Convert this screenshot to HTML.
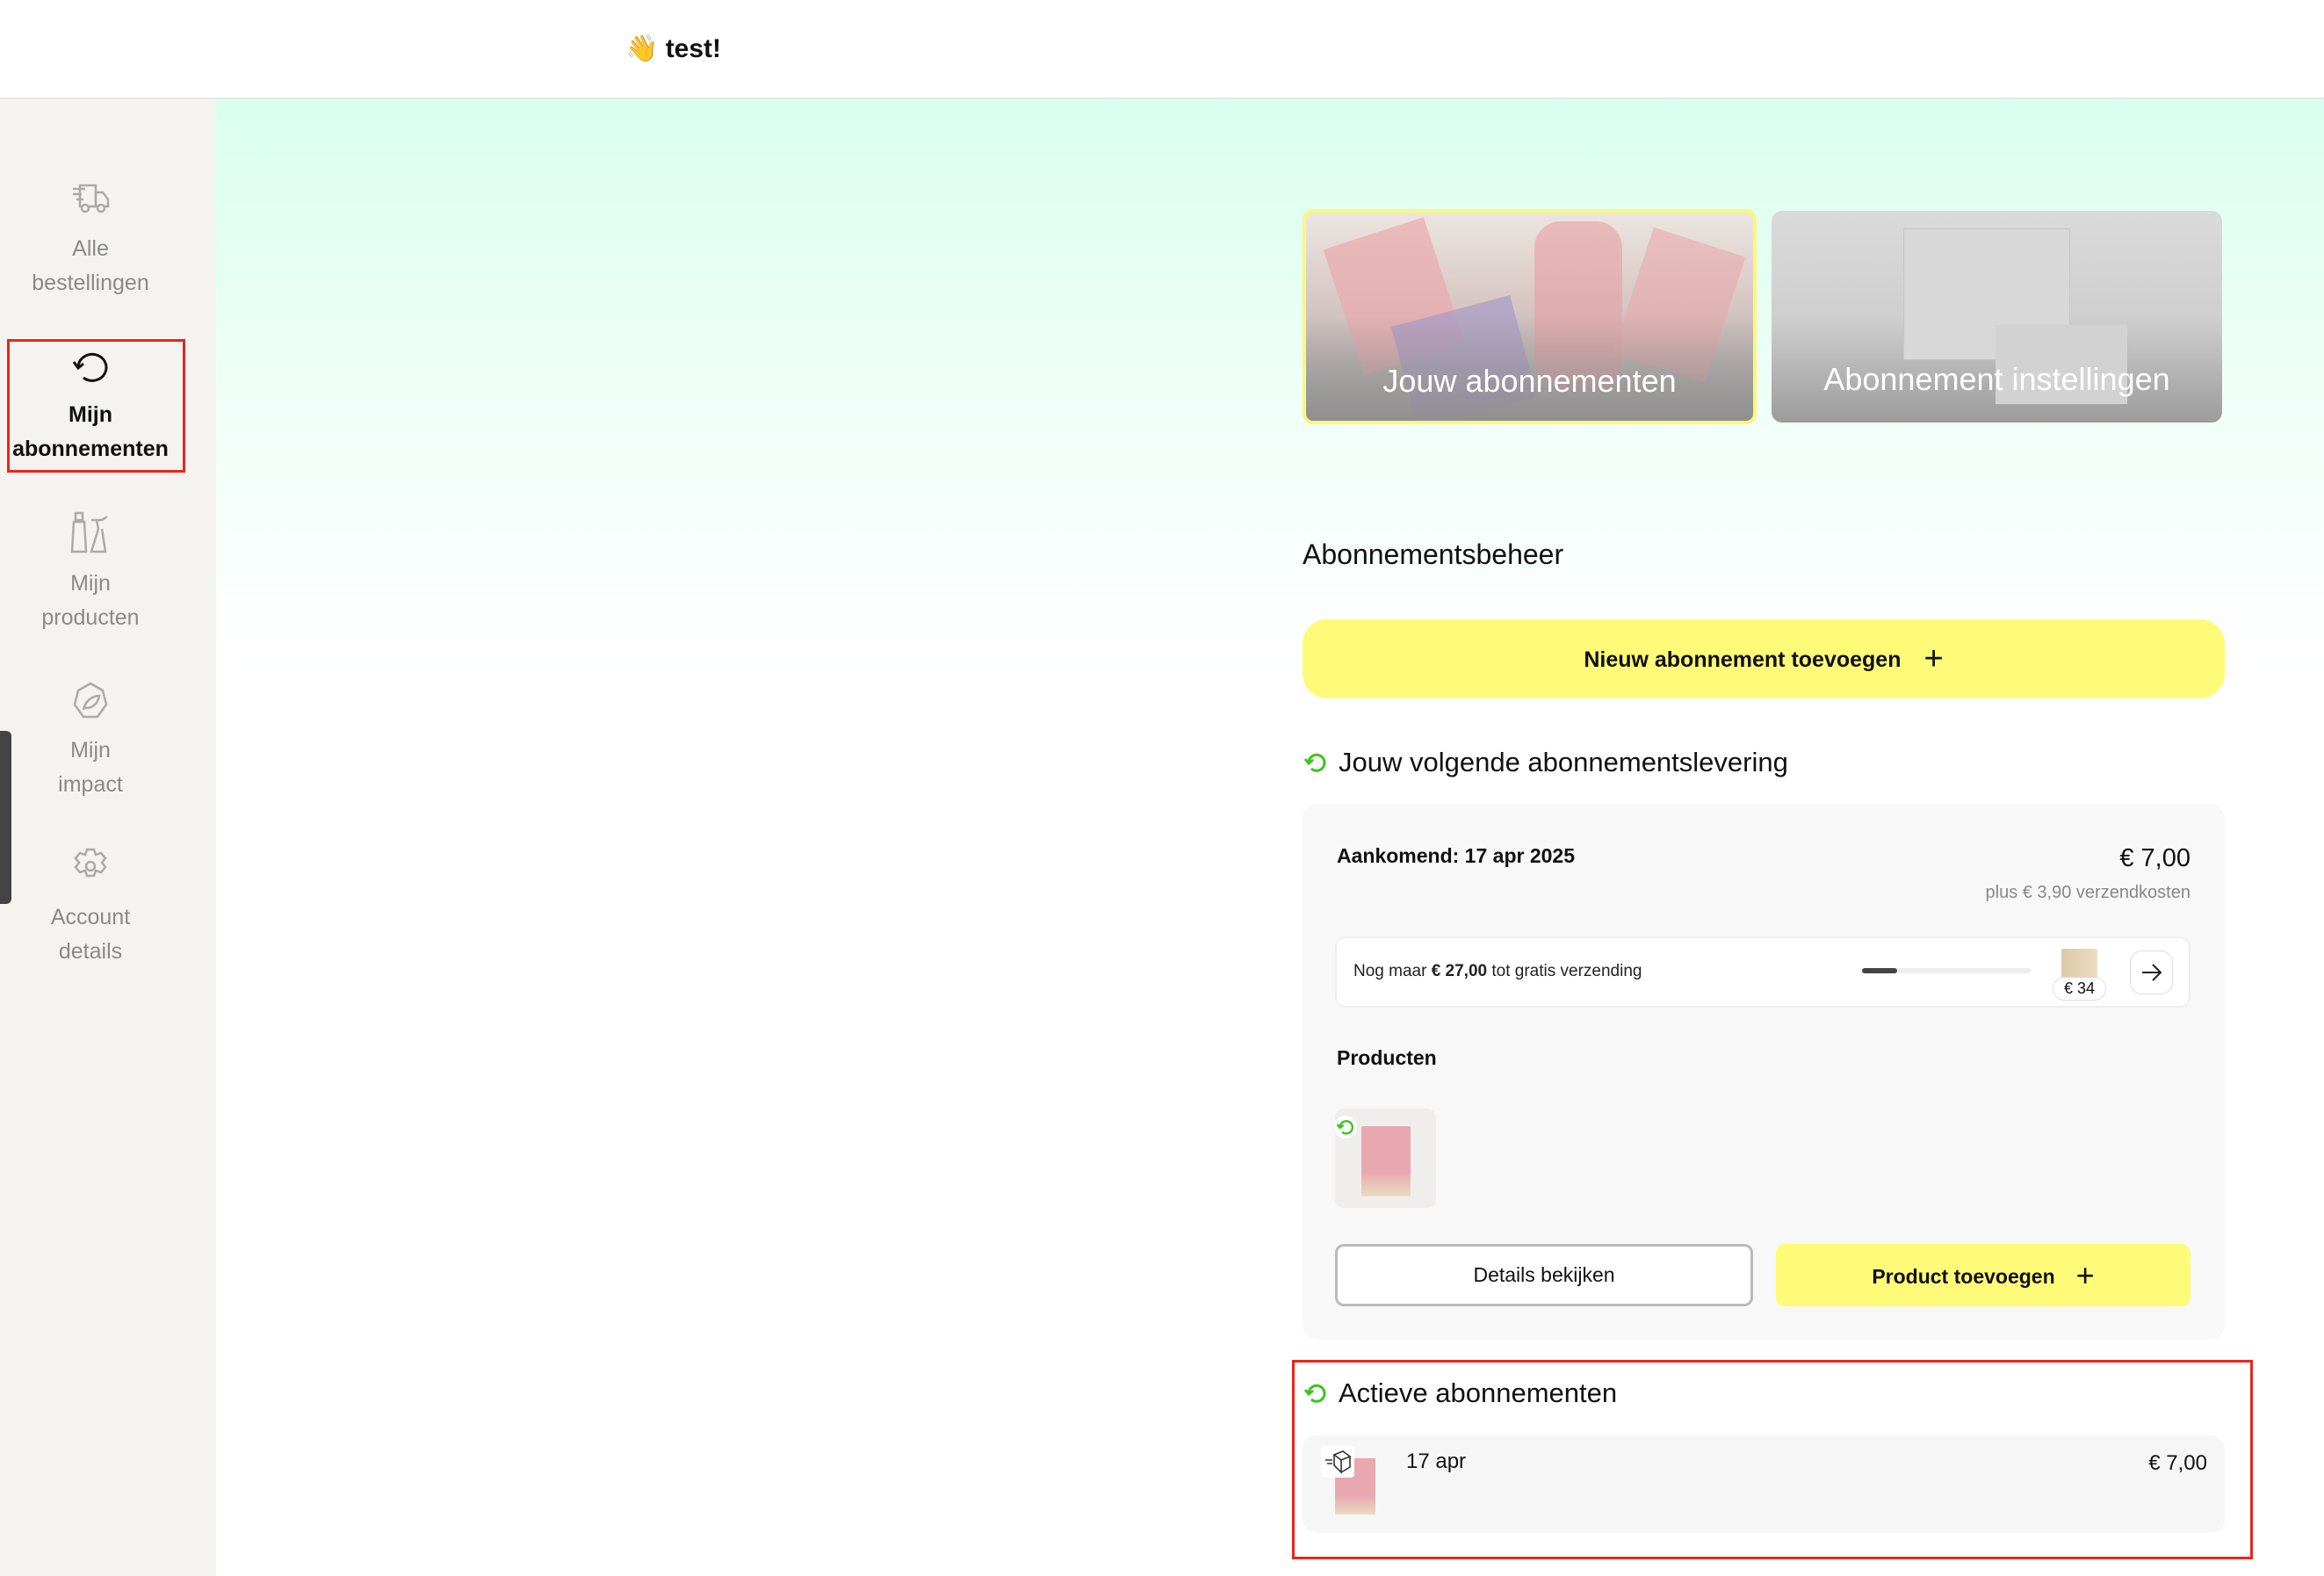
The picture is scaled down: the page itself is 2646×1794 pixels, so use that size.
<!DOCTYPE html>
<html><head><meta charset="utf-8"><style>
*{margin:0;padding:0;box-sizing:border-box}
body{width:2646px;height:1794px;position:relative;overflow:hidden;font-family:"Liberation Sans",sans-serif;background:#fff;color:#111}
.abs{position:absolute}
#hdr{left:0;top:0;width:2646px;height:113px;background:#fff;border-bottom:2px solid #e6e6e6}
#side{left:0;top:113px;width:246px;height:1681px;background:#f4f3f0}
#main{left:246px;top:113px;width:2400px;height:1681px;background:linear-gradient(#d9fff0 0px,#f3fffa 400px,#fff 650px)}
.nav{position:absolute;left:0;width:206px;text-align:center;font-size:25px;line-height:39px;color:#8a8a8a}
.nav svg{display:block;margin:0 auto}
.card{position:absolute;border-radius:12px;overflow:hidden;color:#fff;font-size:35px;text-align:center}
.ctr{position:absolute;left:0;right:0;text-align:center}
</style></head><body>
<div id="hdr" class="abs"><div class="abs" style="left:712px;top:38px;font-size:30px;font-weight:bold;color:#111">👋 test!</div></div>
<div id="side" class="abs"></div>
<div class="abs" style="left:0;top:832px;width:13px;height:197px;background:#444;border-radius:0 6px 6px 0"></div>
<div id="main" class="abs"></div>

<div class="nav" style="top:207px;left:0">
<svg width="44" height="40" viewBox="0 0 44 40" fill="none" stroke="#aaa" stroke-width="2.5"><path d="M2 8h14M2 14h10M6 20h8"/><path d="M10 4h18v24H10z"/><path d="M28 12h8l6 8v8H28z"/><circle cx="16" cy="30" r="4" fill="#f4f3f0"/><circle cx="34" cy="30" r="4" fill="#f4f3f0"/></svg>
<div style="margin-top:17px">Alle<br>bestellingen</div></div>

<div class="abs" style="left:8px;top:386px;width:203px;height:152px;border:3px solid #e8261c"></div>
<div class="nav" style="top:396px;left:0;color:#111;font-weight:bold">
<svg width="44" height="44" viewBox="0 0 44 44" fill="none" stroke="#111" stroke-width="3"><path d="M8 22a16 15 0 1 1 6 12"/><path d="M3 16l5 7 6-5"/></svg>
<div style="margin-top:13px">Mijn<br>abonnementen</div></div>

<div class="nav" style="top:582px">
<svg width="46" height="50" viewBox="0 0 46 50" fill="none" stroke="#aaa" stroke-width="2.5"><path d="M6 2h8v8H6zM4 12h12l2 34H2z"/><path d="M24 10h12l6-4M30 10l2 10-8 26h16l-4-26"/></svg>
<div style="margin-top:13px">Mijn<br>producten</div></div>

<div class="nav" style="top:776px">
<svg width="44" height="44" viewBox="0 0 44 44" fill="none" stroke="#aaa" stroke-width="2.5"><path d="M8 10l14-8 14 8 4 16-10 14H14L4 26z"/><path d="M14 32c2-10 10-16 18-16-2 10-8 14-16 14"/></svg>
<div style="margin-top:15px">Mijn<br>impact</div></div>

<div class="nav" style="top:964px">
<svg width="44" height="44" viewBox="0 0 44 44" fill="none" stroke="#aaa" stroke-width="2.5"><path d="M18 3h8l2 6 6-2 5 6-4 5 4 5-5 6-6-2-2 6h-8l-2-6-6 2-5-6 4-5-4-5 5-6 6 2z"/><circle cx="22" cy="22" r="5"/></svg>
<div style="margin-top:17px">Account<br>details</div></div>

<div class="card" style="left:1483px;top:238px;width:517px;height:245px;border:4px solid #fbf87a;background:linear-gradient(#ece6e0,#d9c9c6 40%,#a9a5a6 100%)">
<div class="abs" style="left:40px;top:20px;width:120px;height:150px;background:#e9a9ad;transform:rotate(-18deg);opacity:.7"></div>
<div class="abs" style="left:260px;top:10px;width:100px;height:190px;background:#e79ea4;border-radius:30px;opacity:.6"></div>
<div class="abs" style="left:110px;top:110px;width:140px;height:120px;background:#a89ac7;transform:rotate(-15deg);opacity:.7"></div>
<div class="abs" style="left:370px;top:30px;width:110px;height:150px;background:#e7a9ac;transform:rotate(18deg);opacity:.6"></div>
<div class="abs" style="left:0;right:0;bottom:0;height:120px;background:linear-gradient(rgba(150,150,150,0),rgba(140,140,140,.85))"></div>
<div class="ctr" style="top:171px;font-size:36px">Jouw abonnementen</div></div>

<div class="card" style="left:2017px;top:240px;width:513px;height:241px;background:linear-gradient(#dadada,#cfcfcf 50%,#9c9c9c)">
<div class="abs" style="left:150px;top:20px;width:190px;height:150px;background:#d8d8d8;border:1px solid #c6c6c6"></div>
<div class="abs" style="left:255px;top:130px;width:150px;height:90px;background:#d2d2d2"></div>
<div class="ctr" style="top:171px;font-size:36px">Abonnement instellingen</div></div>

<div class="abs" style="left:1483px;top:613px;font-size:32px;color:#111">Abonnementsbeheer</div>

<div class="abs" style="left:1483px;top:705px;width:1050px;height:90px;background:#fffb78;border-radius:28px;font-size:25px;font-weight:bold;text-align:center;line-height:90px">Nieuw abonnement toevoegen<span style="font-weight:normal;font-size:38px;margin-left:26px;vertical-align:-3px">+</span></div>

<svg class="abs" style="left:1484px;top:854px" width="28" height="28" viewBox="0 0 28 28" fill="none" stroke="#3bc41e" stroke-width="3"><path d="M6 14a9 9 0 1 1 3 7"/><path d="M2 10l4 5 5-4"/></svg>
<div class="abs" style="left:1524px;top:850px;font-size:31px">Jouw volgende abonnementslevering</div>

<div class="abs" style="left:1483px;top:916px;width:1050px;height:608px;background:#f8f8f8;border-radius:16px"></div>
<div class="abs" style="left:1522px;top:961px;font-size:23px;font-weight:bold">Aankomend: 17 apr 2025</div>
<div class="abs" style="left:2300px;width:194px;top:961px;font-size:29px;text-align:right">€ 7,00</div>
<div class="abs" style="left:2200px;width:294px;top:1005px;font-size:20px;text-align:right;color:#888">plus € 3,90 verzendkosten</div>

<div class="abs" style="left:1520px;top:1066px;width:974px;height:81px;background:#fff;border:2px solid #eee;border-radius:12px"></div>
<div class="abs" style="left:1541px;top:1095px;font-size:19px;color:#222">Nog maar <b>€ 27,00</b> tot gratis verzending</div>
<div class="abs" style="left:2120px;top:1102px;width:192px;height:6px;background:#eee;border-radius:3px"><div style="width:40px;height:6px;background:#444;border-radius:3px"></div></div>
<div class="abs" style="left:2347px;top:1080px;width:41px;height:33px;background:linear-gradient(90deg,#ddc9aa,#ecdcc2);border-radius:2px"></div>
<div class="abs" style="left:2337px;top:1112px;width:61px;height:27px;background:#fff;border:1px solid #ddd;border-radius:14px;font-size:18px;text-align:center;line-height:25px">€ 34</div>
<div class="abs" style="left:2425px;top:1082px;width:49px;height:50px;border:1px solid #ddd;border-radius:14px;background:#fff"></div>
<svg class="abs" style="left:2436px;top:1094px" width="28" height="26" viewBox="0 0 28 26" fill="none" stroke="#222" stroke-width="2"><path d="M3 13h21M15 4l9 9-9 9"/></svg>

<div class="abs" style="left:1522px;top:1191px;font-size:23px;font-weight:bold">Producten</div>
<div class="abs" style="left:1520px;top:1262px;width:115px;height:113px;background:#efeeec;border-radius:10px"></div>
<div class="abs" style="left:1550px;top:1282px;width:56px;height:80px;background:linear-gradient(#e8a7b1 65%,#e9dcc0);border-radius:2px"></div>
<div class="abs" style="left:1519px;top:1270px;width:26px;height:26px;background:#fff;border-radius:50%"></div>
<svg class="abs" style="left:1521px;top:1272px" width="22" height="22" viewBox="0 0 28 28" fill="none" stroke="#3bc41e" stroke-width="3"><path d="M6 14a9 9 0 1 1 3 7"/><path d="M2 10l4 5 5-4"/></svg>

<div class="abs" style="left:1520px;top:1416px;width:476px;height:71px;border:3px solid #bbb;border-radius:10px;background:#fff;font-size:23px;text-align:center;line-height:65px">Details bekijken</div>
<div class="abs" style="left:2022px;top:1416px;width:472px;height:71px;border-radius:10px;background:#fffb78;font-size:23px;font-weight:bold;text-align:center;line-height:71px">Product toevoegen<span style="font-weight:normal;font-size:36px;margin-left:24px;vertical-align:-3px">+</span></div>

<div class="abs" style="left:1471px;top:1548px;width:1094px;height:227px;border:3px solid #e8261c"></div>
<svg class="abs" style="left:1484px;top:1572px" width="28" height="28" viewBox="0 0 28 28" fill="none" stroke="#3bc41e" stroke-width="3"><path d="M6 14a9 9 0 1 1 3 7"/><path d="M2 10l4 5 5-4"/></svg>
<div class="abs" style="left:1524px;top:1568px;font-size:31px">Actieve abonnementen</div>
<div class="abs" style="left:1483px;top:1634px;width:1050px;height:111px;background:#f6f6f6;border-radius:16px"></div>
<div class="abs" style="left:1520px;top:1660px;width:46px;height:64px;background:linear-gradient(#e8a7b1 65%,#e9dcc0)"></div>
<div class="abs" style="left:1504px;top:1646px;width:38px;height:36px;background:#fff;border-radius:4px"></div>
<svg class="abs" style="left:1507px;top:1648px" width="32" height="32" viewBox="0 0 32 32" fill="none" stroke="#333" stroke-width="1.6"><path d="M12 8l10-4 8 6-10 4zM12 8v12l8 8V14M30 10v12l-10 6"/><path d="M2 14h8M4 18h6"/></svg>
<div class="abs" style="left:1601px;top:1650px;font-size:24px">17 apr</div>
<div class="abs" style="left:2380px;width:133px;top:1652px;font-size:24px;text-align:right">€ 7,00</div>
</body></html>
